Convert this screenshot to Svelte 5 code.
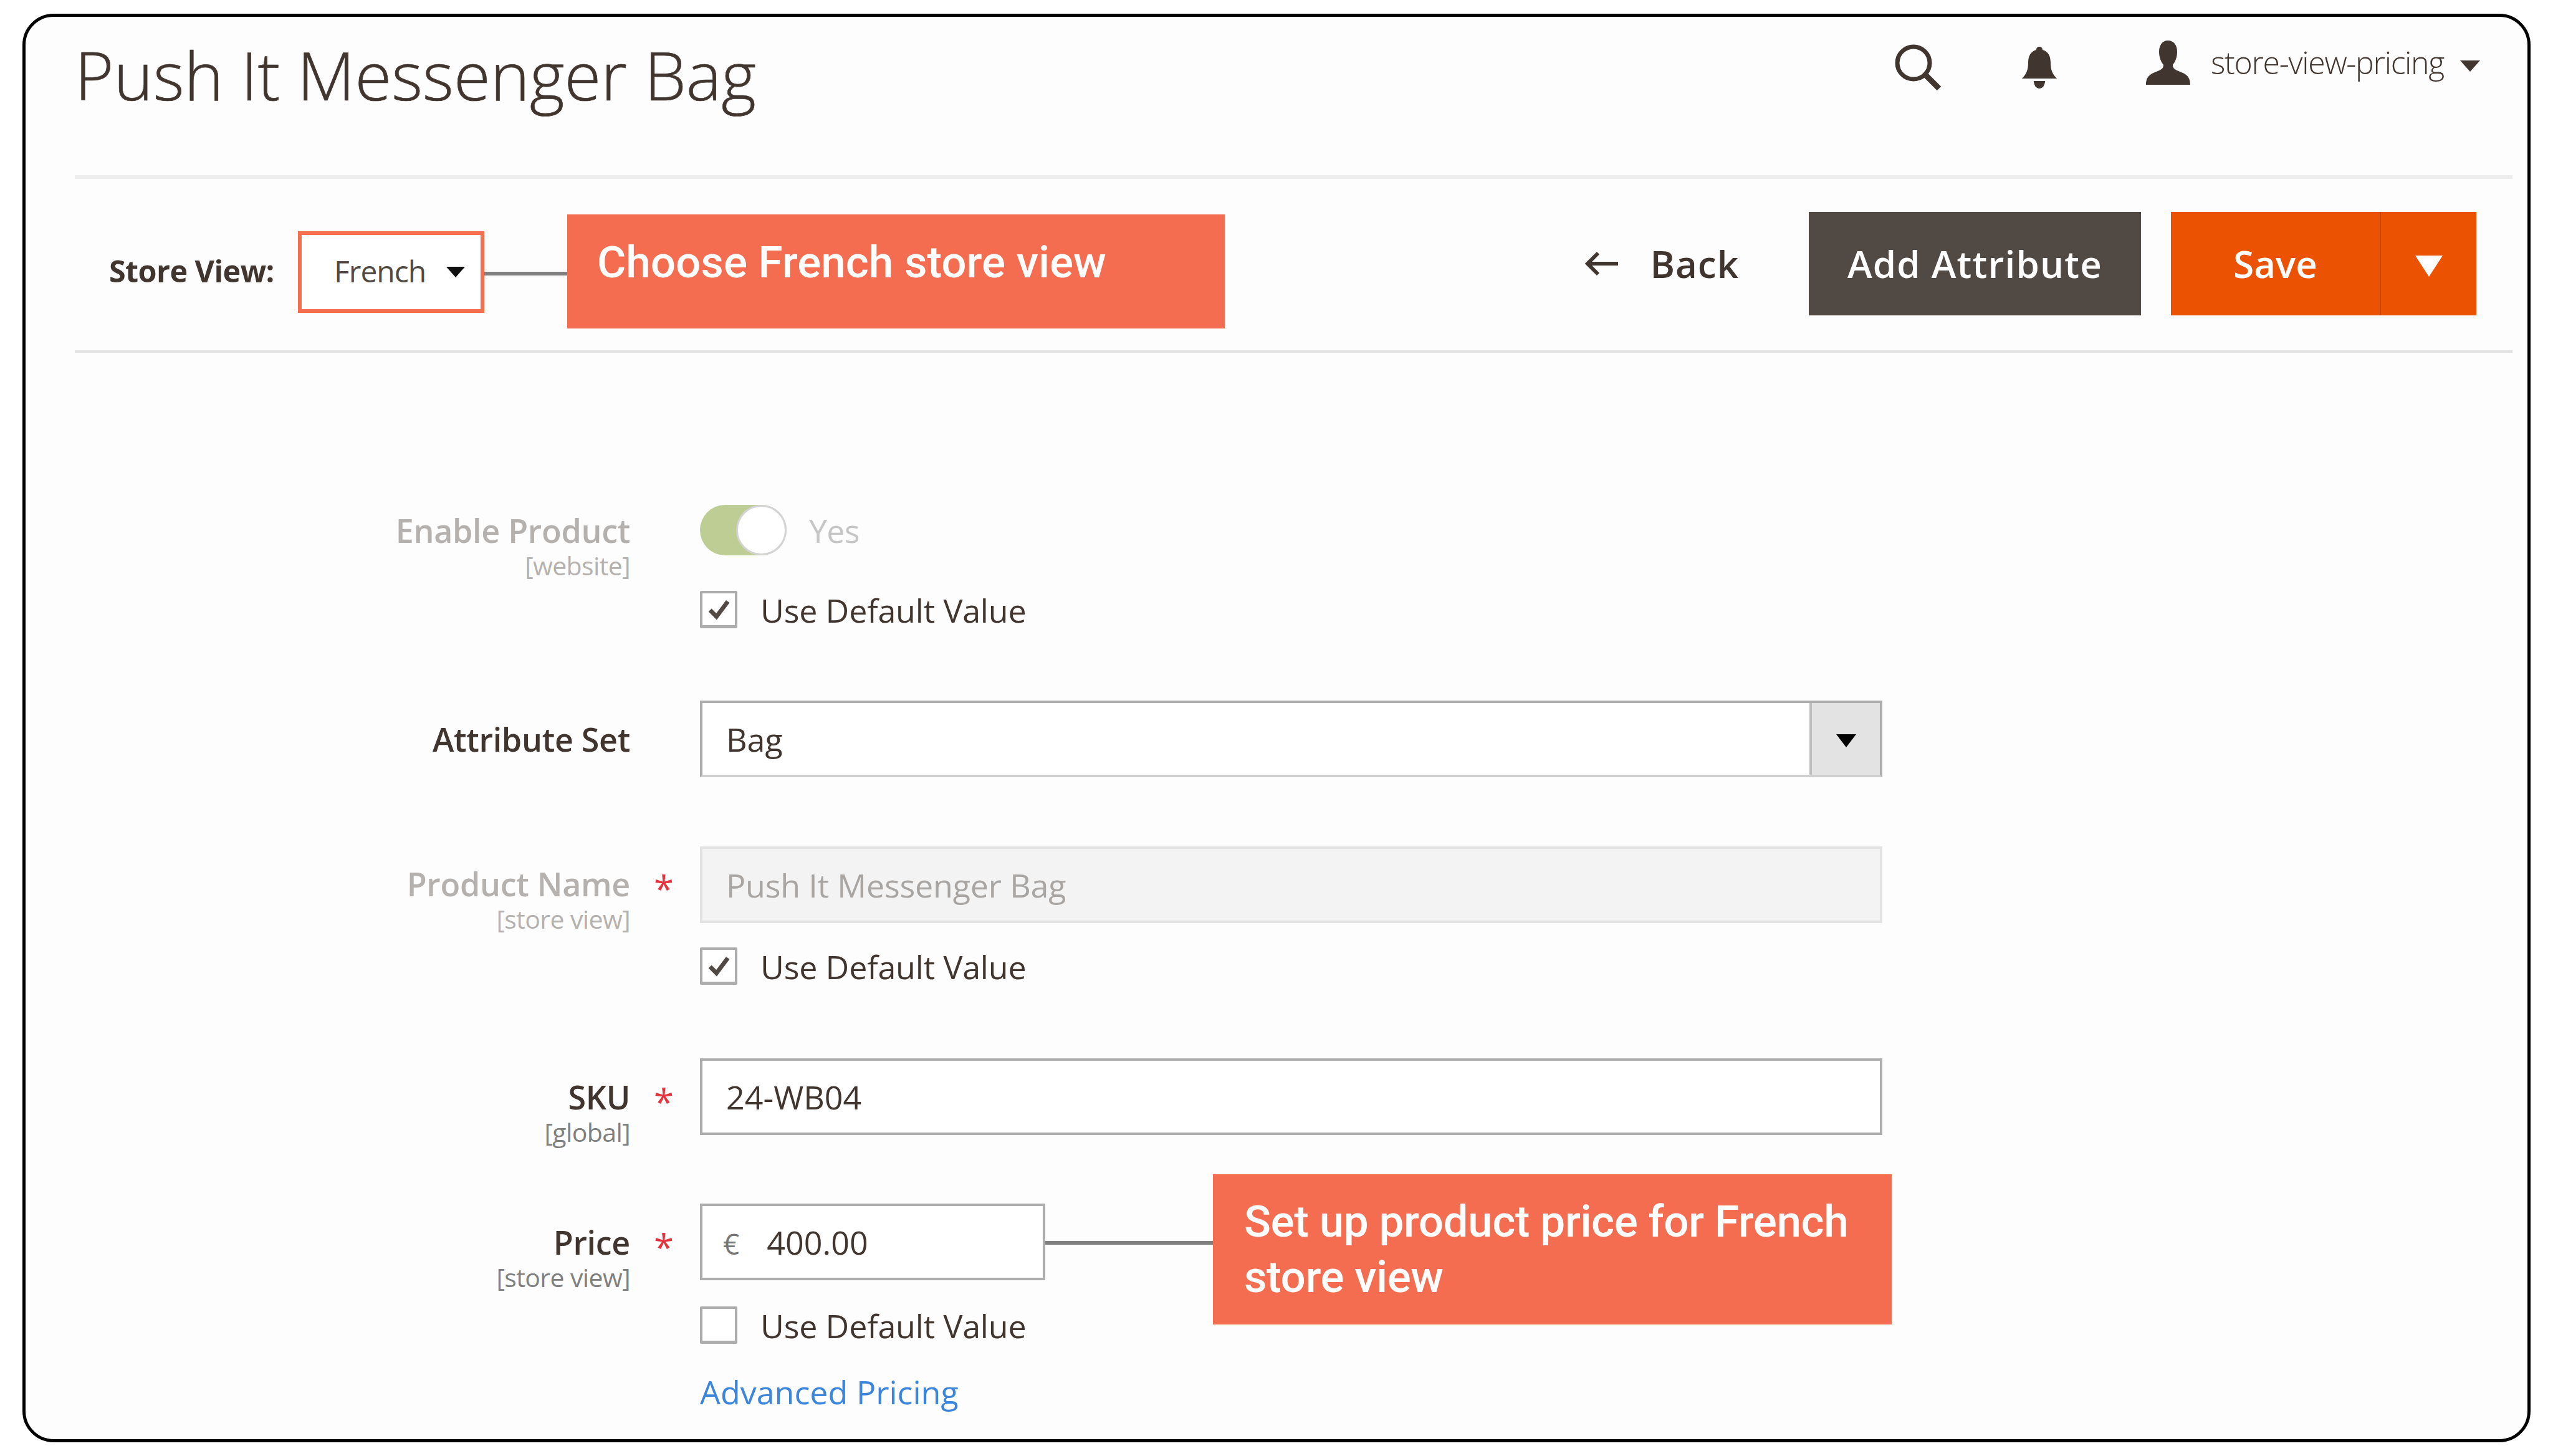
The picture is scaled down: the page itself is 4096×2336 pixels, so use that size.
<script>
  const checkedMark = true;
</script>

<div class="frame">
  <header class="top">
    <h1>Push It Messenger Bag</h1>
    <div class="tools">
      <svg class="i-search" viewBox="0 0 76 76"><circle cx="31" cy="31" r="26" fill="none" stroke="#41362f" stroke-width="7"/><path d="M50 50 72 72" stroke="#41362f" stroke-width="9" fill="none"/></svg>
      <svg class="i-bell" viewBox="0 0 56 67"><path d="M28 0c3 0 5 2 5 5 10 3 13 11 13 21 0 11 3 18 10 25H0c7-7 10-14 10-25 0-10 3-18 13-21 0-3 2-5 5-5zM19 55h18c0 7-4 12-9 12s-9-5-9-12z" fill="#41362f"/></svg>
      <svg class="i-user" viewBox="0 0 71 71"><path d="M35 0c10 0 15 8 15 18 0 9-3 16-7 21 0 5 2 7 9 10 10 4 19 7 19 22H0c0-15 9-18 19-22 7-3 9-5 9-10-4-5-7-12-7-21C21 8 26 0 35 0z" fill="#41362f"/></svg>
      <span class="username">store-view-pricing</span>
      <span class="tri small-user"></span>
    </div>
  </header>

  <section class="actions">
    <div class="store">
      <span class="store-label">Store View:</span>
      <div class="store-box"><span class="store-val">French</span><span class="tri small-store"></span></div>
      <span class="wire store-wire"></span>
      <div class="callout callout-store">Choose French store view</div>
    </div>
    <div class="buttons">
      <svg class="i-back" viewBox="0 0 54 40"><path d="M54 20H6M22 3 5 20l17 17" fill="none" stroke="#41362f" stroke-width="6"/></svg>
      <span class="back">Back</span>
      <button class="add">Add Attribute</button>
      <div class="save"><span class="save-main">Save</span><span class="save-drop"><span class="tri big"></span></span></div>
    </div>
  </section>

  <section class="form">
    <div class="field f-enable">
      <div class="lab muted"><div class="t">Enable Product</div><div class="scope">[website]</div></div>
      <div class="ctl">
        <div class="toggle-row"><span class="toggle"><span class="knob"></span></span><span class="yes">Yes</span></div>
        <label class="check c1"><span class="box">
          {#if checkedMark}<svg viewBox="0 0 60 60"><path d="M14 31l12 12L47 15" fill="none" stroke="#514943" stroke-width="8"/></svg>{/if}
        </span>Use Default Value</label>
      </div>
    </div>

    <div class="field f-set">
      <div class="lab"><div class="t">Attribute Set</div></div>
      <div class="ctl">
        <div class="select"><span class="val">Bag</span><span class="sel-btn"><span class="tri small-sel"></span></span></div>
      </div>
    </div>

    <div class="field f-name">
      <div class="lab muted"><div class="t">Product Name</div><div class="scope">[store view]</div><span class="star">*</span></div>
      <div class="ctl">
        <div class="input disabled">Push It Messenger Bag</div>
        <label class="check c2"><span class="box"><svg viewBox="0 0 60 60"><path d="M14 31l12 12L47 15" fill="none" stroke="#514943" stroke-width="8"/></svg></span>Use Default Value</label>
      </div>
    </div>

    <div class="field f-sku">
      <div class="lab"><div class="t">SKU</div><div class="scope">[global]</div><span class="star">*</span></div>
      <div class="ctl"><div class="input">24-WB04</div></div>
    </div>

    <div class="field f-price">
      <div class="lab"><div class="t">Price</div><div class="scope">[store view]</div><span class="star">*</span></div>
      <div class="ctl">
        <div class="price-row">
          <div class="input price"><span class="euro">€</span>400.00</div>
          <span class="wire price-wire"></span>
          <div class="callout callout-price">Set up product price for French store view</div>
        </div>
        <label class="check c3"><span class="box"></span>Use Default Value</label>
        <a class="adv" href="#top">Advanced Pricing</a>
      </div>
    </div>
  </section>
</div>

<style>
  :global(body) { margin: 0; background: #fff; }
  * { box-sizing: border-box; }
  .frame {
    margin: 22px 0 0 36px;
    width: 4024px;
    height: 2292px;
    border: 5px solid #000;
    border-radius: 50px;
    background: #fdfdfd;
    padding: 0 24px 0 79px;
    font-family: "Open Sans", sans-serif;
    color: #303030;
    overflow: hidden;
  }
  .top {
    height: 260px;
    border-bottom: 6px solid #eee;
    display: flex;
    justify-content: space-between;
    align-items: flex-start;
  }
  h1 {
    margin: 23px 0 0;
    font-size: 107px;
    font-weight: 300;
    line-height: 140px;
    color: #41362f;
    -webkit-text-stroke: 0.7px #41362f;
  }
  .tools { display: flex; align-items: flex-start; margin-top: 38px; margin-right: 52px; }
  .i-search { width: 76px; height: 76px; margin-top: 5px; }
  .i-bell { width: 56px; height: 67px; margin-left: 129px; margin-top: 10px; }
  .i-user { width: 71px; height: 71px; margin-left: 143px; }
  .username { font-size: 50px; font-weight: 300; line-height: 70px; color: #41362f; margin-left: 33px; letter-spacing: -1.3px; }
  .tri { display: inline-block; width: 0; height: 0; border-style: solid; border-color: #41362f transparent transparent; }
  .small-user { border-width: 18px 16px 0; margin: 32px 0 0 26px; }
  .actions {
    height: 279px;
    border-bottom: 4px solid #e3e3e3;
    display: flex;
    justify-content: space-between;
    align-items: flex-start;
  }
  .store { display: flex; align-items: center; margin: 57px 0 0 55px; position: relative; height: 183px; }
  .store-label { font-weight: 700; font-size: 48.5px; color: #41362f; width: 303px; letter-spacing: -0.6px; margin-top: -3px; }
  .store-box {
    width: 299px; height: 131px;
    border: 6px solid #f46f50;
    background: #fff;
    display: flex; align-items: center;
    padding-left: 52px;
    font-size: 48px; font-weight: 400; color: #514943;
    letter-spacing: -1px;
    margin-top: 2px;
  }
  .store-val { margin-top: -4px; }
  .small-store { border-width: 17px 15px 0; border-top-color: #111; margin-left: 33px; }
  .wire { display: block; background: #808080; height: 6px; }
  .store-wire { width: 133px; margin-top: 6px; }
  .callout { background: #f46d50; color: #fff; font-family: Roboto, sans-serif; font-weight: 500; }
  .callout-store {
    width: 1055px; height: 183px;
    font-size: 71px; line-height: 84px;
    padding: 35px 0 0 48px;
  }
  .buttons { display: flex; align-items: center; margin: 53px 58px 0 0; height: 166px; }
  .i-back { width: 54px; height: 40px; }
  .back { font-size: 60px; font-weight: 600; color: #41362f; margin-left: 51px; margin-right: 112px; letter-spacing: 1px; }
  .add {
    width: 533px; height: 166px; border: 0;
    background: #514943; color: #fff;
    font-family: inherit; font-size: 60px; font-weight: 600;
    letter-spacing: 1.2px;
    padding: 0;
  }
  .save { display: flex; margin-left: 48px; height: 166px; width: 490px; background: #eb5202; color: #fff; font-size: 60px; font-weight: 600; }
  .save-main { width: 337px; display: flex; align-items: center; justify-content: center; border-right: 2px solid #c84602; }
  .save-drop { flex: 1; display: flex; align-items: center; justify-content: center; }
  .big { border-width: 34px 22px 0; border-top-color: #fff; margin-top: 8px; }

  .form { padding-top: 244px; }
  .field { display: grid; grid-template-columns: 891px 1897px; column-gap: 112px; }
  .lab { text-align: right; position: relative; }
  .t { font-size: 52px; font-weight: 600; line-height: 70px; color: #41362f; letter-spacing: -0.3px; }
  .scope { font-size: 41px; line-height: 50px; margin-top: -4px; color: #808080; letter-spacing: -0.6px; }
  .muted .t, .muted .scope { color: #b5b1ae; }
  .star { position: absolute; left: 929px; top: 8px; color: #e5323c; font-size: 58px; line-height: 70px; }

  .f-enable { margin-bottom: 116px; }
  .f-enable .lab { margin-top: 6px; }
  .toggle-row { display: flex; align-items: center; height: 81px; }
  .toggle { width: 139px; height: 81px; border-radius: 41px; background: #bdcd93; position: relative; display: block; }
  .knob { position: absolute; right: 0; top: 0; width: 81px; height: 81px; border-radius: 50%; background: #fff; border: 3px solid #d4d4d4; }
  .yes { margin-left: 36px; font-size: 52px; color: #c6c6c6; letter-spacing: -0.8px; }
  .check { display: flex; align-items: center; font-size: 52px; color: #41362f; height: 60px; letter-spacing: -0.2px; }
  .box { width: 60px; height: 60px; border: 4px solid #adadad; border-bottom-width: 5px; border-radius: 2px; background: #fff; margin-right: 37px; flex: none; display: block; }
  .box svg { display: block; width: 52px; height: 52px; }
  .c1 { margin-top: 57px; }

  .f-set { margin-bottom: 111px; }
  .f-set .lab { margin-top: 27px; }
  .select { height: 123px; border: 4px solid #adadad; border-bottom-color: #cfcfcf; display: flex; background: #fff; }
  .val { flex: 1; font-size: 52px; line-height: 115px; padding-left: 38px; color: #41362f; }
  .sel-btn { width: 113px; background: #e3e3e3; border-left: 4px solid #bdbdbd; display: flex; align-items: center; justify-content: center; }
  .small-sel { border-width: 21px 16px 0; border-top-color: #000; margin-top: 6px; }

  .input { height: 123px; border: 4px solid #adadad; background: #fff; font-size: 52px; line-height: 115px; padding-left: 38px; color: #41362f; }
  .input.disabled { background: #f3f3f3; border-color: #e3e3e3; color: #a8a5a3; letter-spacing: -0.2px; }
  .f-name { margin-bottom: 118px; }
  .f-name .lab { margin-top: 25px; }
  .f-sku .lab, .f-price .lab { margin-top: 27px; }
  .c2 { margin-top: 39px; }
  .f-sku { margin-bottom: 90px; }
  .price-row { display: flex; align-items: center; position: relative; }
  .input.price { width: 554px; padding-left: 33px; flex: none; }
  .euro { color: #777; margin-right: 44px; font-size: 46px; font-weight: 400; }
  .price-wire { width: 269px; margin-top: 3px; }
  .callout-price {
    position: absolute; left: 823px; top: -47px;
    width: 1089px; height: 241px;
    font-size: 71px; line-height: 89px;
    letter-spacing: -0.42px;
    padding: 31px 40px 0 50px;
  }
  .c3 { margin-top: 42px; }
  .adv { display: block; margin-top: 42px; font-size: 52px; line-height: 70px; color: #3b86dc; text-decoration: none; }
</style>
